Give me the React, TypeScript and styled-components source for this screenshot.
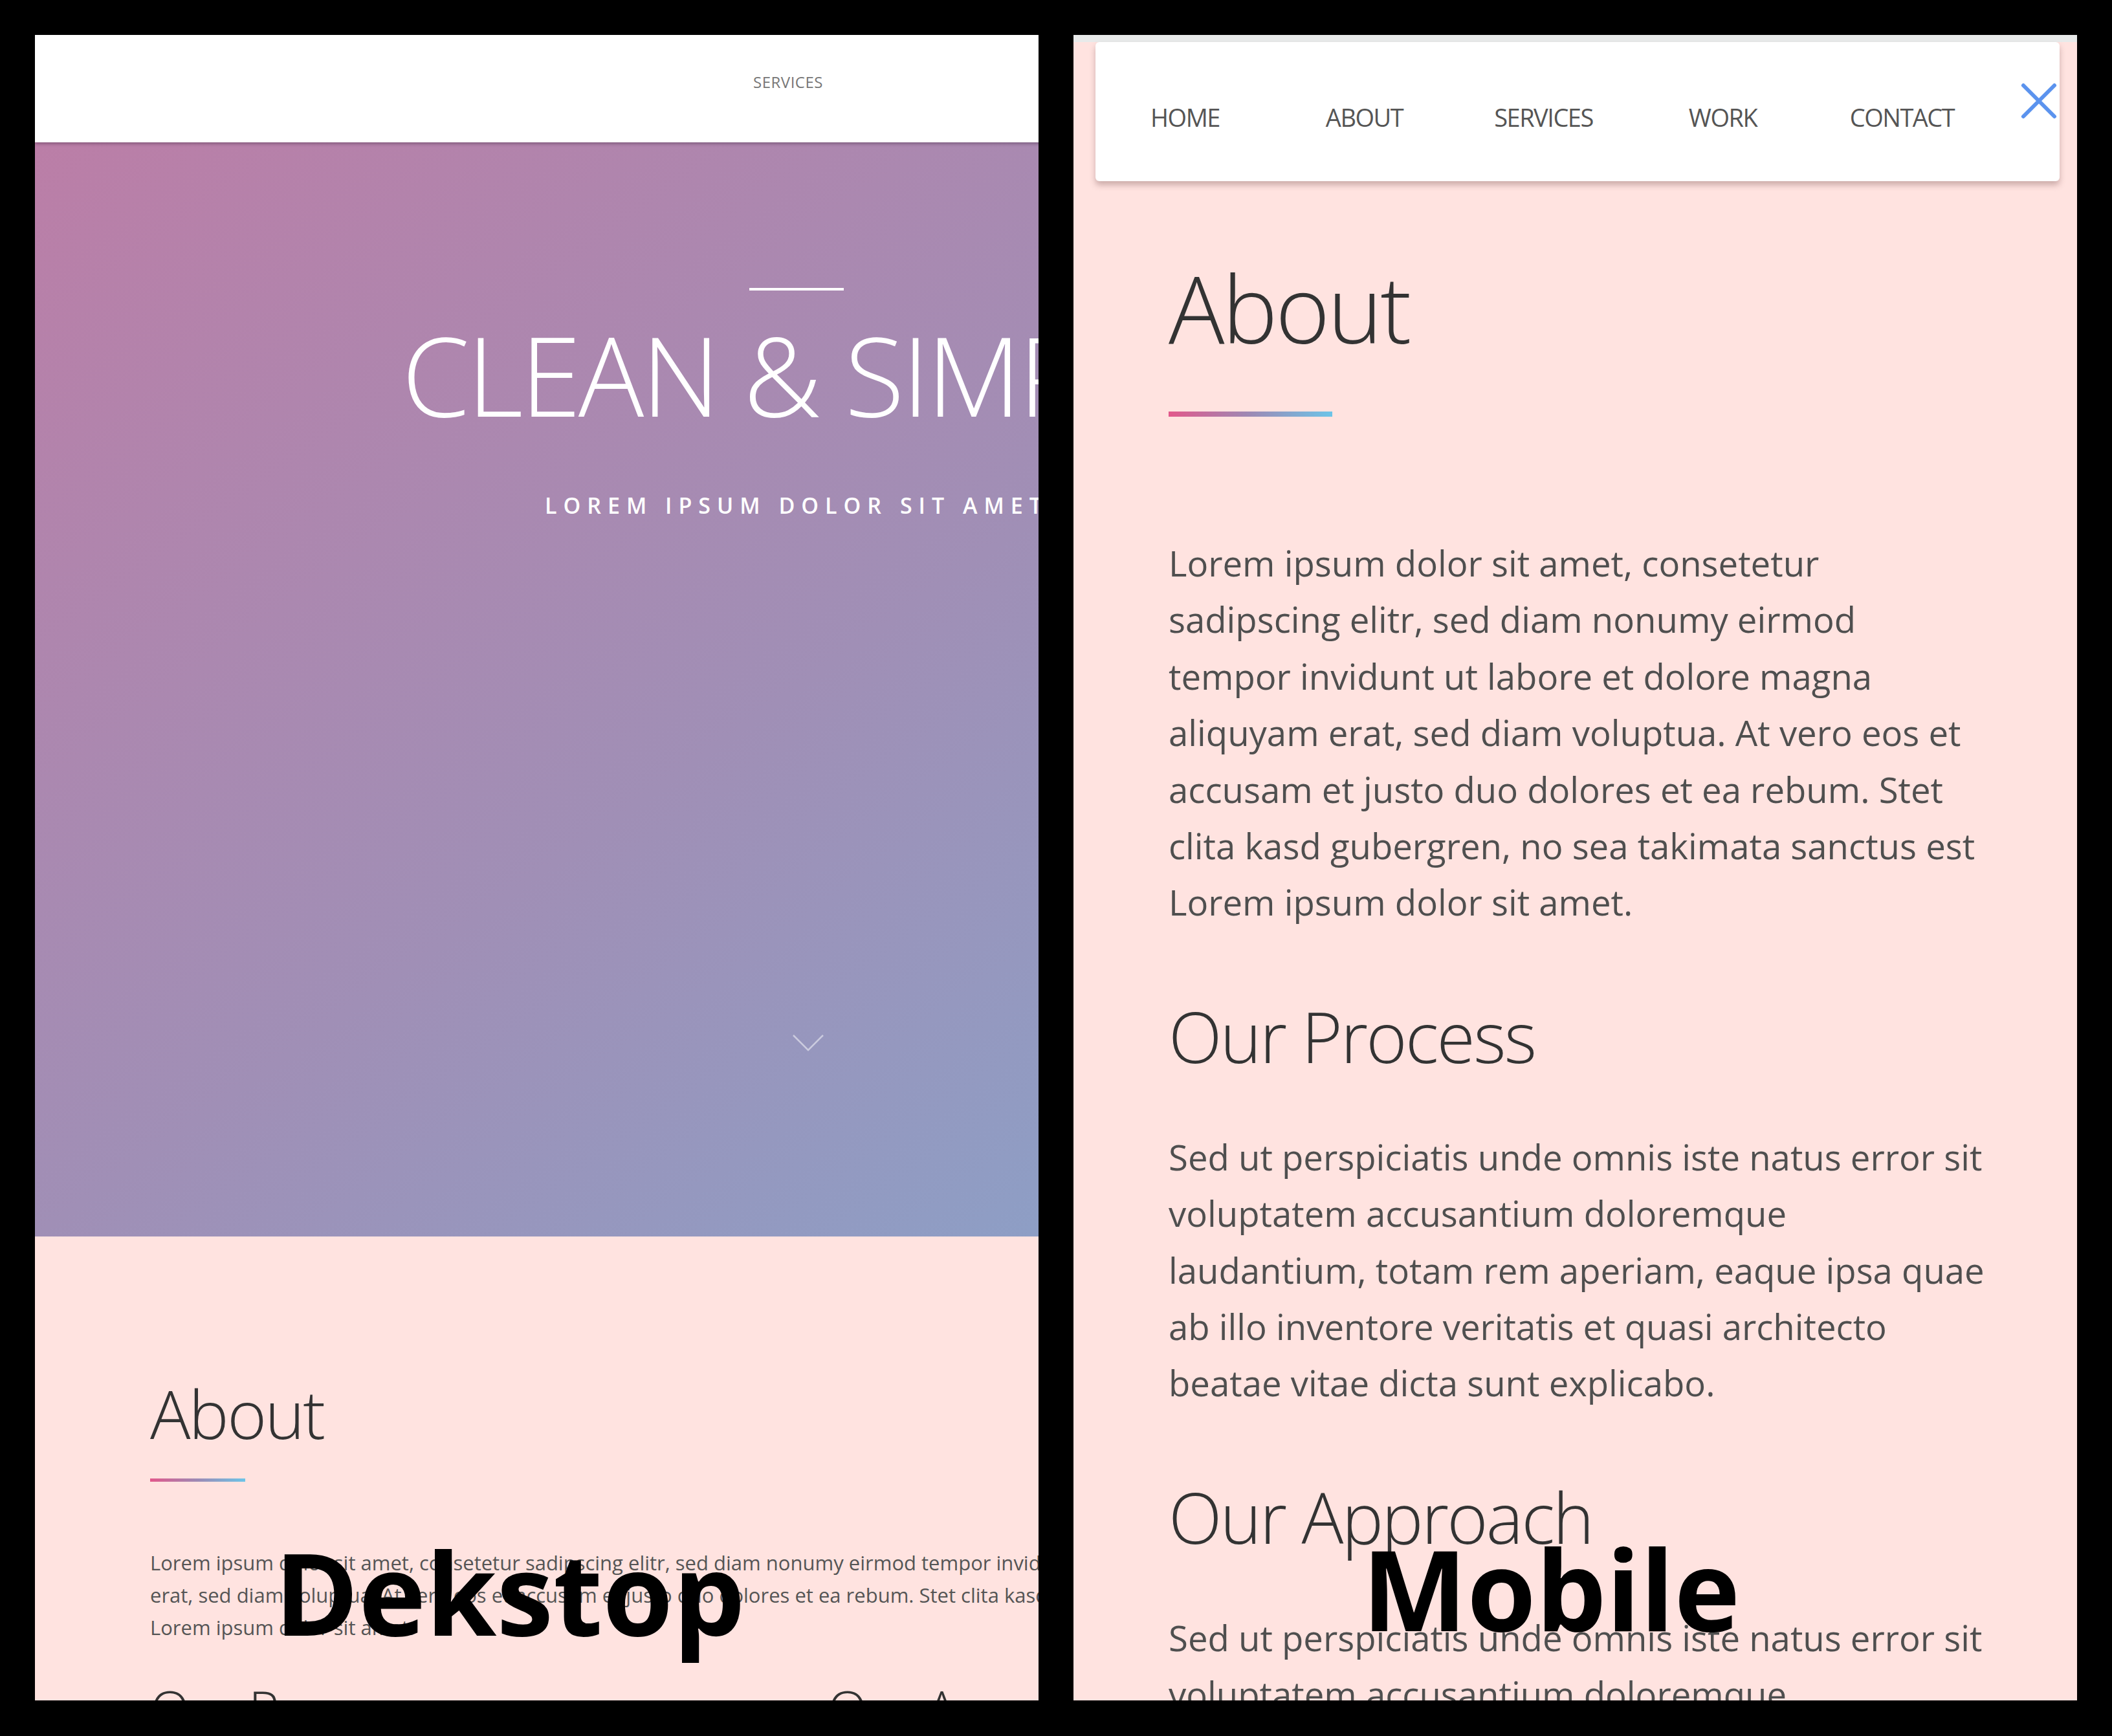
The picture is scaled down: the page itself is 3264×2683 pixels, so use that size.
import React from "react";
import styled, { createGlobalStyle } from "styled-components";

const GlobalStyle = createGlobalStyle`
  html, body {
    margin: 0;
    padding: 0;
    background: #000;
  }
  * {
    box-sizing: border-box;
  }
`;

const FONT = `"Open Sans", "Noto Sans", "Liberation Sans", sans-serif`;

export const StyledPage = styled.div`
  display: grid;
  grid-template-columns: 1551px 1551px;
  column-gap: 54px;
  padding: 54px;
  width: 3264px;
  height: 2683px;
  background: #000;
  font-family: ${FONT};
`;

export const StyledPanel = styled.section`
  position: relative;
  overflow: hidden;
  height: 2574px;
  background: #ffe3e0;
`;

export const StyledLabel = styled.div<{ $left: number; $top: number; $size: number }>`
  position: absolute;
  left: ${(p) => p.$left}px;
  top: ${(p) => p.$top}px;
  font-family: ${FONT};
  font-weight: 700;
  font-size: ${(p) => p.$size}px;
  line-height: 1;
  color: #000;
  white-space: nowrap;
  z-index: 5;
`;

/* ---------- desktop ---------- */

export const StyledDeskSite = styled.div`
  width: 2354px;
  display: flex;
  flex-direction: column;
`;

export const StyledDeskNav = styled.nav`
  height: 166px;
  background: #fff;
  display: flex;
  justify-content: center;
  align-items: center;
  padding: 0 26px 22px 0;
  position: relative;
  z-index: 1;
  box-shadow: 0 2px 5px rgba(60, 30, 60, 0.45);
`;

export const StyledDeskNavLink = styled.a`
  font-size: 24px;
  letter-spacing: 0.5px;
  color: #777;
  text-transform: uppercase;
  text-decoration: none;
`;

export const StyledHero = styled.header`
  height: 1691px;
  background: linear-gradient(to bottom right, #bb7ea7 0%, #a08fb6 50%, #84a6cd 100%);
  display: flex;
  flex-direction: column;
  align-items: center;
  padding-top: 225px;
`;

export const StyledHeroRule = styled.div`
  width: 146px;
  height: 4px;
  background: #fff;
`;

export const StyledHeroTitle = styled.h1`
  margin: 45px 0 0;
  font-weight: 300;
  font-size: 169px;
  line-height: 1;
  letter-spacing: -4px;
  color: #fff;
  white-space: nowrap;
`;

export const StyledHeroSub = styled.p`
  margin: 101px 0 0;
  font-weight: 600;
  font-size: 34px;
  line-height: 1;
  letter-spacing: 10px;
  color: #fff;
  white-space: nowrap;
`;

export const StyledScrollHint = styled.div`
  margin: auto 0 286px 36px;
  width: 50px;
  height: 27px;
  display: flex;
`;

export const StyledDeskContent = styled.main`
  background: #ffe3e0;
  padding: 221px 178px 0;
`;

export const StyledHeading = styled.h2<{ $size: number; $gap?: number }>`
  margin: ${(p) => p.$gap ?? 0}px 0 0;
  font-weight: 300;
  font-size: ${(p) => p.$size}px;
  line-height: 1;
  letter-spacing: ${(p) => -p.$size / 40}px;
  color: #333;
  white-space: nowrap;
`;

export const StyledAccent = styled.div<{ $w: number; $h: number; $gap: number }>`
  width: ${(p) => p.$w}px;
  height: ${(p) => p.$h}px;
  margin-top: ${(p) => p.$gap}px;
  background: linear-gradient(to right, #e2588b, #9c8ab5 50%, #6cc4e8);
`;

export const StyledDeskText = styled.p`
  margin: 100px 0 0;
  font-size: 31px;
  line-height: 50px;
  letter-spacing: 0;
  color: #555;
  white-space: nowrap;
`;

export const StyledDeskColumns = styled.div`
  display: grid;
  grid-template-columns: 1fr 1fr;
  column-gap: 96px;
  margin-top: 60px;
`;

/* ---------- mobile ---------- */

export const StyledMobileSite = styled.div`
  display: flex;
  flex-direction: column;
`;

export const StyledTopStrip = styled.div`
  height: 11px;
  background: #e8eaea;
`;

export const StyledNavCard = styled.nav`
  margin: 0 27px 0 34px;
  height: 215px;
  background: #fff;
  border-radius: 6px;
  box-shadow: 0 6px 10px rgba(110, 70, 70, 0.35);
  display: flex;
  align-items: center;
  position: relative;
`;

export const StyledNavLink = styled.a`
  width: 277px;
  text-align: center;
  padding-top: 16px;
  font-size: 38px;
  letter-spacing: -1.5px;
  color: #555;
  text-decoration: none;
`;

export const StyledClose = styled.button`
  margin: 62px 3px 0 auto;
  align-self: flex-start;
  width: 58px;
  height: 58px;
  padding: 0;
  border: none;
  background: none;
  display: flex;
`;

export const StyledMobileContent = styled.main`
  padding: 123px 120px 0 147px;
`;

export const StyledMobileText = styled.p<{ $gap: number }>`
  margin: ${(p) => p.$gap}px 0 0;
  font-size: 54.5px;
  line-height: 87.4px;
  color: #4f4f4f;
  white-space: nowrap;
`;

const lines = (items: string[]) =>
  items.map((l, i) => (
    <React.Fragment key={i}>
      {l}
      {i < items.length - 1 && <br />}
    </React.Fragment>
  ));

const aboutMobile = [
  "Lorem ipsum dolor sit amet, consetetur",
  "sadipscing elitr, sed diam nonumy eirmod",
  "tempor invidunt ut labore et dolore magna",
  "aliquyam erat, sed diam voluptua. At vero eos et",
  "accusam et justo duo dolores et ea rebum. Stet",
  "clita kasd gubergren, no sea takimata sanctus est",
  "Lorem ipsum dolor sit amet.",
];

const processMobile = [
  "Sed ut perspiciatis unde omnis iste natus error sit",
  "voluptatem accusantium doloremque",
  "laudantium, totam rem aperiam, eaque ipsa quae",
  "ab illo inventore veritatis et quasi architecto",
  "beatae vitae dicta sunt explicabo.",
];

const aboutDesk = [
  "Lorem ipsum dolor sit amet, consetetur sadipscing elitr, sed diam nonumy eirmod tempor invidunt ut labore et dolore magna aliquyam",
  "erat, sed diam voluptua. At vero eos et accusam et justo duo dolores et ea rebum. Stet clita kasd gubergren, no sea takimata sanctus est",
  "Lorem ipsum dolor sit amet.",
];

const navItems = ["Home", "About", "Services", "Work", "Contact"];

function Desktop() {
  return (
    <StyledPanel>
      <StyledDeskSite>
        <StyledDeskNav>
          <StyledDeskNavLink href="#services">Services</StyledDeskNavLink>
        </StyledDeskNav>
        <StyledHero>
          <StyledHeroRule />
          <StyledHeroTitle>CLEAN &amp; SIMPLE</StyledHeroTitle>
          <StyledHeroSub>LOREM IPSUM DOLOR SIT AMET</StyledHeroSub>
          <StyledScrollHint>
            <svg width="50" height="27" viewBox="0 0 50 27">
              <polyline
                points="2,2 25,25 48,2"
                fill="none"
                stroke="rgba(255,255,255,0.5)"
                strokeWidth="2.5"
              />
            </svg>
          </StyledScrollHint>
        </StyledHero>
        <StyledDeskContent>
          <StyledHeading $size={104}>About</StyledHeading>
          <StyledAccent $w={147} $h={5} $gap={49} />
          <StyledDeskText>{lines(aboutDesk)}</StyledDeskText>
          <StyledDeskColumns>
            <StyledHeading $size={80}>Our Process</StyledHeading>
            <StyledHeading $size={80}>Our Approach</StyledHeading>
          </StyledDeskColumns>
        </StyledDeskContent>
      </StyledDeskSite>
      <StyledLabel $left={370} $top={2318} $size={176}>
        Dekstop
      </StyledLabel>
    </StyledPanel>
  );
}

function Mobile() {
  return (
    <StyledPanel>
      <StyledMobileSite>
        <StyledTopStrip />
        <StyledNavCard>
          {navItems.map((n) => (
            <StyledNavLink key={n} href={`#${n.toLowerCase()}`}>
              {n.toUpperCase()}
            </StyledNavLink>
          ))}
          <StyledClose aria-label="Close menu">
            <svg width="58" height="58" viewBox="0 0 58 58">
              <path
                d="M5 5 L53 53 M53 5 L5 53"
                stroke="#5b93ee"
                strokeWidth="6"
                strokeLinecap="round"
              />
            </svg>
          </StyledClose>
        </StyledNavCard>
        <StyledMobileContent>
          <StyledHeading $size={144}>About</StyledHeading>
          <StyledAccent $w={253} $h={8} $gap={89} />
          <StyledMobileText $gap={183}>{lines(aboutMobile)}</StyledMobileText>
          <StyledHeading $size={108} $gap={109}>
            Our Process
          </StyledHeading>
          <StyledMobileText $gap={89}>{lines(processMobile)}</StyledMobileText>
          <StyledHeading $size={108} $gap={109}>
            Our Approach
          </StyledHeading>
          <StyledMobileText $gap={89}>{lines(processMobile)}</StyledMobileText>
        </StyledMobileContent>
      </StyledMobileSite>
      <StyledLabel $left={446} $top={2314} $size={172}>
        Mobile
      </StyledLabel>
    </StyledPanel>
  );
}

export default function App() {
  return (
    <>
      <GlobalStyle />
      <StyledPage>
        <Desktop />
        <Mobile />
      </StyledPage>
    </>
  );
}
